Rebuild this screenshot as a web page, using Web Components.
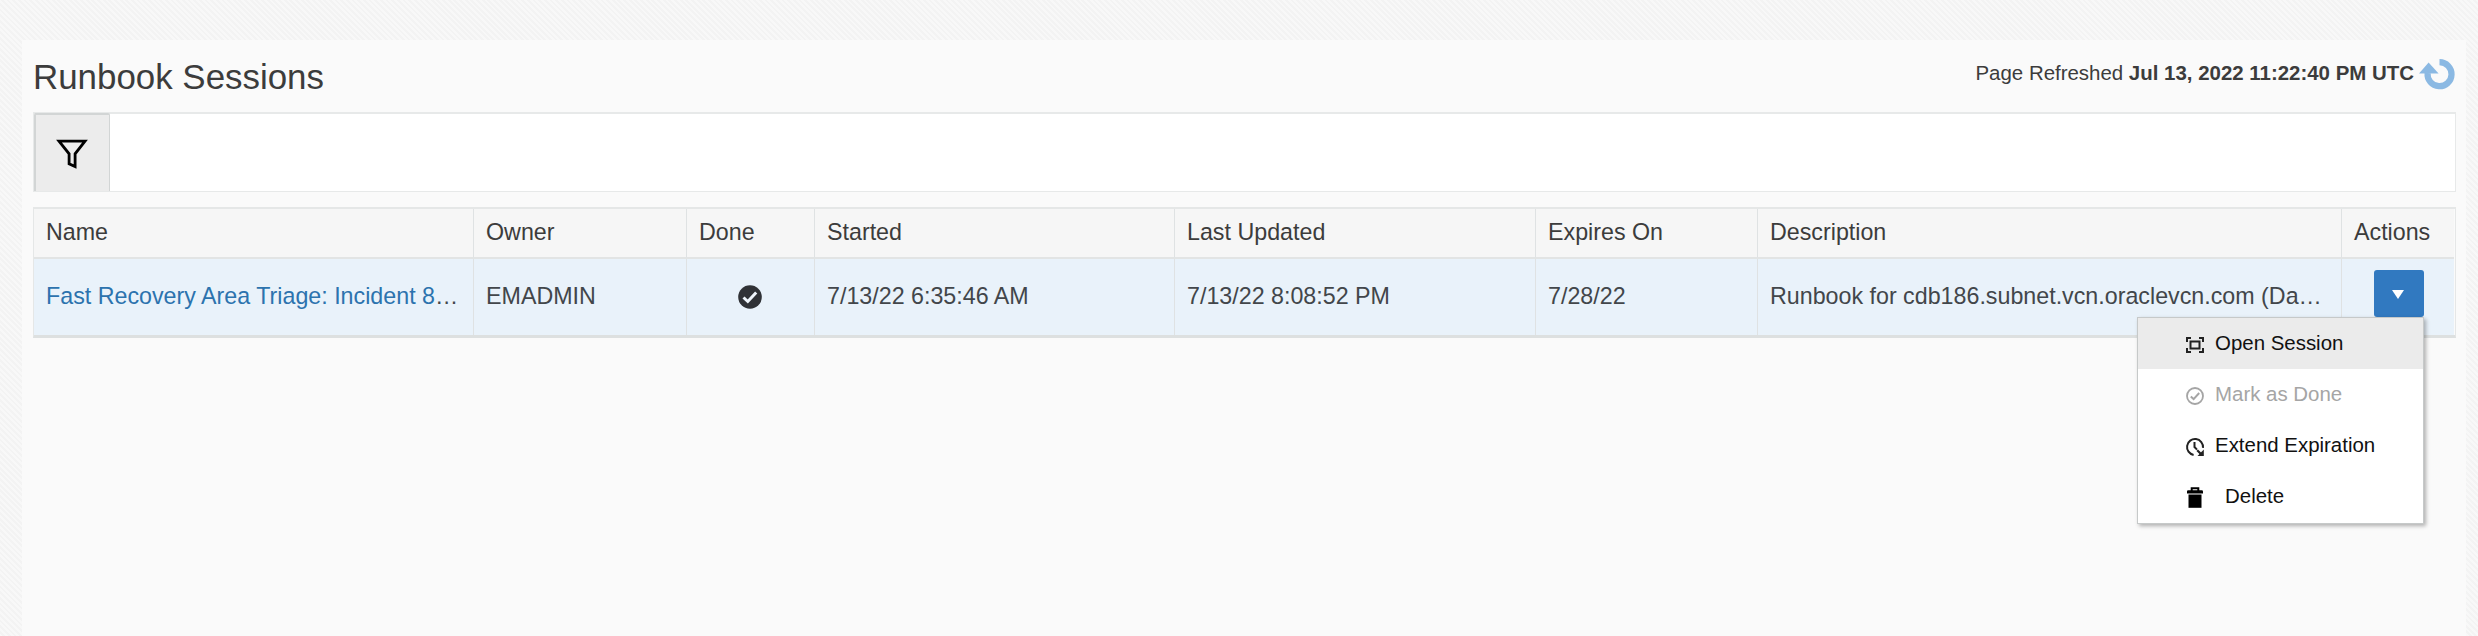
<!DOCTYPE html>
<html lang="en">
<head>
<meta charset="utf-8">
<title>Runbook Sessions</title>
<style>
html,body{margin:0;height:100%}
body{display:flow-root;font-family:"Liberation Sans",Arial,sans-serif;color:#3c3c3c;background:#f6f6f6 repeating-linear-gradient(45deg,#f8f8f8 0 2px,#f3f3f3 2px 4px);overflow:hidden}
</style>
</head>
<body>
<runbook-page></runbook-page>
<script>
function define(name, html) {
  customElements.define(name, class extends HTMLElement {
    constructor() {
      super();
      const t = document.createElement('template');
      t.innerHTML = html;
      this.attachShadow({mode: 'open'}).append(t.content.cloneNode(true));
    }
  });
}

define('page-header', `
<style>
:host{display:flex;justify-content:space-between;height:72px}
h1{margin:0;font-size:34.9px;font-weight:400;line-height:40px;padding-top:17px;white-space:nowrap}
.r{display:flex;align-items:flex-start;font-size:20.45px;line-height:24px;padding-top:21px;white-space:pre}
svg{margin:-3px 1px 0 5px}
</style>
<h1>Runbook Sessions</h1>
<div class="r"><span>Page Refreshed <b>Jul 13, 2022 11:22:40 PM UTC</b></span><svg width="36" height="32" viewBox="0 0 36 32"><path d="M20.5 4.2A12 12 0 1 1 8.6 15" fill="none" stroke="#8bb9e3" stroke-width="6.2"/><path d="M0 15.4 9.6 4.6 19.6 15.4Z" fill="#8bb9e3"/></svg></div>`);

define('filter-bar', `
<style>
:host{display:flex;height:80px;box-sizing:border-box;border:solid #e7e9e9;border-width:2px 1px 1px;background:#fff}
button{all:unset;box-sizing:border-box;width:76px;margin:-1px 0 0 0;border:2px solid #d2d5d5;border-right-width:1px;border-bottom:0;border-radius:2px 2px 0 0;background:#ececec;display:grid;place-items:center}
svg{display:block;margin:1px 2px 0 0}
</style>
<button aria-label="Filter"><svg width="34" height="32" viewBox="0 0 34 32"><path d="M4 3.2H30L20.1 15.8V28.6L14.1 25.8V15.8Z" fill="none" stroke="#000" stroke-width="2.8"/></svg></button>`);

define('menu-item', `
<style>
:host{display:flex;align-items:center;height:51px;color:#111;font-size:20.45px;line-height:24px;white-space:nowrap;padding-left:47px}
:host([active]){background:#ebebeb}
:host([disabled]){color:#a5a5a5}
.i{width:20px;height:22px;margin:2px 10px 0 0}
:host([wide]) .i{margin-right:20px}
.t{margin-top:-1px}
</style>
<span class="i"><slot name="icon"></slot></span><span class="t"><slot></slot></span>`);

define('action-menu', `
<style>
:host{display:block;position:absolute;z-index:2;right:0;top:47px;width:287px;height:207px;box-sizing:border-box;border:1px solid #c6c9c9;background:#fff;box-shadow:2px 2px 4px rgba(0,0,0,.3)}
svg{display:block}
</style>
<menu-item active><svg slot="icon" width="20" height="22" viewBox="0 0 20 22" fill="none" stroke="#222" stroke-width="2"><path d="M2 8V4H6M14 4H18V8M18 14V18H14M6 18H2V14"/><path d="M5.5 7.5H14.5V14.5H5.5Z"/></svg>Open Session</menu-item>
<menu-item disabled><svg slot="icon" width="20" height="22" viewBox="0 0 20 22" fill="none" stroke="#a5a5a5"><circle cx="10" cy="11" r="8" stroke-width="1.8"/><path d="M5.8 11.5 8.6 14.1 14.2 8" stroke-width="2"/></svg>Mark as Done</menu-item>
<menu-item><svg slot="icon" width="20" height="22" viewBox="0 0 20 22" fill="none" stroke="#222" stroke-width="2"><path d="M18 11.8A8 8 0 1 0 8.6 18.9"/><path d="M9.5 6V11L12 13.6"/><path d="M12.2 14.2 16.5 18.5" stroke-width="2.2"/><path d="M18.8 13.5V20H12.5Z" fill="#222" stroke="none"/></svg>Extend Expiration</menu-item>
<menu-item wide><svg slot="icon" width="20" height="22" viewBox="0 0 20 22"><path d="M3.5 7.5H16.5V20.8H3.5Z"/><path d="M2 6.5V4.3Q2 3.2 3.2 3.2H16.8Q18 3.2 18 4.3V6.5Z"/><path d="M6.7 4V1.2H13.3V4" fill="none" stroke="#000" stroke-width="2"/></svg>Delete</menu-item>`);

define('action-button', `
<style>
:host{display:block;position:relative;width:50px;height:47px}
button{all:unset;display:grid;place-items:center;width:50px;height:47px;border-radius:3px;background:#3179c0}
i{border:6.5px solid transparent;border-top:9px solid #fff;border-bottom:0;margin-top:2px;margin-right:2px}
</style>
<button aria-label="Actions"><i></i></button><action-menu></action-menu>`);

define('sessions-table', `
<style>
:host{display:grid;grid-template-columns:440px 213px 128px 360px 361px 222px 584px 112px;grid-template-rows:50px 76px;margin-top:15px;border:2px solid #e5e7e7;border-left-width:1px;border-right-width:1px;border-bottom:3px solid #dde0e0;font-size:23.25px;line-height:28px;white-space:nowrap}
div{box-sizing:border-box;padding:9px 0 0 12px;border-right:1px solid #dfe2e3}
.h{background:#f6f6f6;border-bottom:2px solid #e2e4e4}
.c{background:#e9f2fa;color:#42464a;padding-top:23px}
a{color:#2c73ae}
.c.k{padding:26px 0 0 51px}
.c.b{padding:11px 0 0 32px}
.l{border-right:0}
svg{display:block}
</style>
<div class="h">Name</div><div class="h">Owner</div><div class="h">Done</div><div class="h">Started</div><div class="h">Last Updated</div><div class="h">Expires On</div><div class="h">Description</div><div class="h l">Actions</div>
<div class="c"><a>Fast Recovery Area Triage: Incident 8</a>…</div><div class="c">EMADMIN</div>
<div class="c k"><svg width="24" height="24" viewBox="0 0 24 24"><circle cx="12" cy="12" r="11.8" fill="#303236"/><path d="M5.5 12.5 9.8 16.5 18.2 7.5" fill="none" stroke="#eff5fb" stroke-width="3"/></svg></div>
<div class="c">7/13/22 6:35:46 AM</div><div class="c">7/13/22 8:08:52 PM</div><div class="c">7/28/22</div><div class="c">Runbook for cdb186.subnet.vcn.oraclevcn.com (Da…</div><div class="c l b"><action-button></action-button></div>`);

define('runbook-page', `
<style>
:host{display:block;box-sizing:border-box;height:596px;margin:40px 12px 0 22px;padding:0 10px 0 11px;background:#fafafa}
</style>
<page-header></page-header><filter-bar></filter-bar><sessions-table></sessions-table>`);
</script>
</body>
</html>
